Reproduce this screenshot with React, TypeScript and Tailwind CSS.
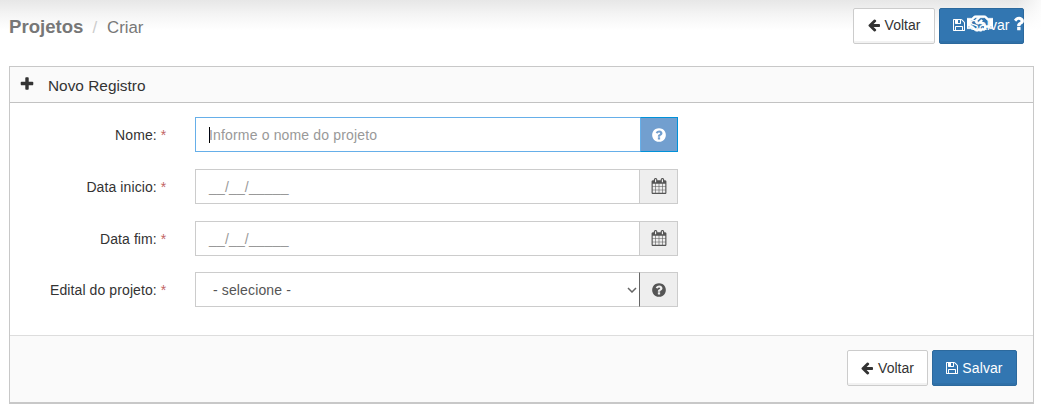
import { type PropsWithChildren, type ReactNode } from "react";
import clsx from "clsx";
import { FaRegHandshake } from "react-icons/fa";

// Solid glyphs on a 1792 unit grid, one em wide.
const glyphs = {
  plus: "M1600 736v192q0 40-28 68t-68 28h-416v416q0 40-28 68t-68 28h-192q-40 0-68-28t-28-68v-416h-416q-40 0-68-28t-28-68v-192q0-40 28-68t68-28h416v-416q0-40 28-68t68-28h192q40 0 68 28t28 68v416h416q40 0 68 28t28 68z",
  arrowLeft:
    "M1664 896v128q0 53-32.5 90.5t-84.5 37.5h-704l293 294q38 36 38 90t-38 90l-75 76q-37 37-90 37-52 0-91-37l-651-652q-37-37-37-90 0-52 37-91l651-650q38-38 91-38 52 0 90 38l75 74q38 38 38 91t-38 91l-293 293h704q52 0 84.5 37.5t32.5 90.5z",
  save: "M512 1536h768v-384h-768v384zm896 0h128v-896q0-14-10-38.5t-20-34.5l-281-281q-10-10-34-20t-39-10v416q0 40-28 68t-68 28h-576q-40 0-68-28t-28-68v-416h-128v1280h128v-416q0-40 28-68t68-28h832q40 0 68 28t28 68v416zm-384-928v-320q0-13-9.5-22.5t-22.5-9.5h-192q-13 0-22.5 9.5t-9.5 22.5v320q0 13 9.5 22.5t22.5 9.5h192q13 0 22.5-9.5t9.5-22.5zm640 32v928q0 40-28 68t-68 28h-1344q-40 0-68-28t-28-68v-1344q0-40 28-68t68-28h928q40 0 88 20t76 48l280 280q28 28 48 76t20 88z",
  calendar:
    "M192 1664h288v-288h-288v288zm352 0h320v-288h-320v288zm-352-352h288v-320h-288v320zm352 0h320v-320h-320v320zm-352-384h288v-288h-288v288zm736 736h320v-288h-320v288zm-384-736h320v-288h-320v288zm768 736h288v-288h-288v288zm-384-352h320v-320h-320v320zm-352-864v-288q0-13-9.5-22.5t-22.5-9.5h-64q-13 0-22.5 9.5t-9.5 22.5v288q0 13 9.5 22.5t22.5 9.5h64q13 0 22.5-9.5t9.5-22.5zm736 864h288v-320h-288v320zm-384-384h320v-288h-320v288zm384 0h288v-288h-288v288zm32-480v-288q0-13-9.5-22.5t-22.5-9.5h-64q-13 0-22.5 9.5t-9.5 22.5v288q0 13 9.5 22.5t22.5 9.5h64q13 0 22.5-9.5t9.5-22.5zm384-64v1280q0 52-38 90t-90 38h-1408q-52 0-90-38t-38-90v-1280q0-52 38-90t90-38h128v-96q0-66 47-113t113-47h64q66 0 113 47t47 113v96h384v-96q0-66 47-113t113-47h64q66 0 113 47t47 113v96h128q52 0 90 38t38 90z",
  help: "M1024 1376v-192q0-14-9-23t-23-9h-192q-14 0-23 9t-9 23v192q0 14 9 23t23 9h192q14 0 23-9t9-23zm256-672q0-88-55.5-163t-138.5-116-170-41q-243 0-371 213-15 24 8 42l132 100q7 6 19 6 16 0 25-12 53-68 86-92 34-24 86-24 48 0 85.5 26t37.5 59q0 38-20 61t-68 45q-63 28-115.5 86.5t-52.5 125.5v36q0 14 9 23t23 9h192q14 0 23-9t9-23q0-19 21.5-49.5t54.5-49.5q32-18 49-28.5t46-35 44.5-48 28-60.5 12.5-81zm384 192q0 209-103 385.5t-279.5 279.5-385.5 103-385.5-103-279.5-279.5-103-385.5 103-385.5 279.5-279.5 385.5-103 385.5 103 279.5 279.5 103 385.5z",
  question:
    "M1088 1256v240q0 16-12 28t-28 12h-240q-16 0-28-12t-12-28v-240q0-16 12-28t28-12h240q16 0 28 12t12 28zm316-600q0 54-15.5 101t-35 76.5-55 59.5-57.5 43.5-61 35.5q-41 23-68.5 65t-27.5 67q0 17-12 32.5t-28 15.5h-240q-15 0-25.5-18.5t-10.5-37.5v-45q0-83 65-156.5t143-108.5q59-27 84-56t25-76q0-42-46.5-74t-107.5-32q-65 0-108 29-35 25-107 115-13 16-31 16-12 0-25-8l-164-125q-13-10-15.5-25t5.5-28q160-266 464-266 80 0 161 31t146 83 106 127.5 41 158.5z",
};

type GlyphName = keyof typeof glyphs;

const Glyph = ({ name, className }: { name: GlyphName; className?: string }) => (
  <svg viewBox="0 0 1792 1792" fill="currentColor" aria-hidden="true" className={clsx("shrink-0", className)}>
    <path d={glyphs[name]} />
  </svg>
);

const BackButton = ({ className }: { className: string }) => (
  <button
    type="button"
    className={clsx(
      "flex h-9 items-center justify-center gap-1 rounded-[2px] border border-[#ccc] bg-white pr-px text-[#333] shadow-[inset_0_-2px_0_rgba(0,0,0,0.05)]",
      className,
    )}
  >
    <Glyph name="arrowLeft" className="size-[14px]" />
    Voltar
  </button>
);

const SaveButton = ({ className }: { className?: string }) => (
  <button
    type="button"
    className={clsx(
      "flex h-9 w-[85px] items-center justify-center gap-[3px] rounded-[2px] border border-[#2c699d] bg-[#3276b1] pr-px text-white shadow-[inset_0_-2px_0_rgba(0,0,0,0.05)]",
      className,
    )}
  >
    <Glyph name="save" className="size-[14px]" />
    <span className="tracking-[0.1px]">Salvar</span>
  </button>
);

type FieldProps = PropsWithChildren<{
  label: string;
  addon: GlyphName;
  focused?: boolean;
  className?: string;
}>;

const Field = ({ label, addon, focused, className, children }: FieldProps) => (
  <div className={clsx("flex h-[35px] items-center", className)}>
    <div className="w-[157px] pr-[0.6px] text-right tracking-[0.1px] text-[#333]">
      {label}: <span className="text-[#c26565]">*</span>
    </div>
    <div className="ml-7 flex h-full w-[483px]">
      <div
        className={clsx(
          "flex min-w-0 flex-1 items-center border border-r-0 bg-white pl-[13px]",
          focused ? "border-[#66afe9]" : "border-[#ccc]",
        )}
      >
        {children}
      </div>
      <div
        className={clsx(
          "flex items-center justify-center border",
          focused
            ? "w-[38px] border-[#0091d9] border-l-[#66afe9] bg-[#729fcf] text-white"
            : "w-[39px] border-[#ccc] bg-[#eee] text-[#555]",
          label === "Edital do projeto" && "border-l-[#666]",
        )}
      >
        <Glyph name={addon} className={clsx("size-4", addon === "calendar" && "mb-px")} />
      </div>
    </div>
  </div>
);

const Placeholder = ({ children }: { children: ReactNode }) => (
  <span className="tracking-[0.16px] text-[#999]">{children}</span>
);

const App = () => (
  <div className="relative flex h-[405px] flex-col overflow-hidden bg-white pr-[7px] pl-[9px] font-['Liberation_Sans',Arial,sans-serif] text-[14px] leading-5">
    {/* Soft shade that the top navigation leaves on the page. */}
    <div className="pointer-events-none absolute inset-x-0 top-0 h-[30px] bg-linear-to-b from-[#e7e7e7] via-[#f5f5f5] to-white">
      <div className="absolute top-0 right-0 h-full w-6 bg-linear-to-r from-transparent to-white/80" />
    </div>

    <header className="relative flex h-[66px] shrink-0 justify-between pt-2">
      <div className="flex h-9 items-center text-[#777]">
        <span className="pt-px text-[18.6px] font-bold">Projetos</span>
        <span className="ml-[9px] pt-[3px] text-[16.8px] text-[#ccc]">/</span>
        <span className="ml-[10px] pt-[3px] text-[16.8px]">Criar</span>
      </div>
      <div className="mr-[10px] flex gap-1">
        <BackButton className="w-[82px] pb-[3px]" />
        <SaveButton className="pb-[3px]" />
      </div>
      {/* Navigation shortcuts float over the page actions. */}
      <div className="absolute top-[13px] right-[6px] flex items-center gap-[16px] text-white">
        <FaRegHandshake className="h-[21px] w-[26px]" stroke="currentColor" strokeWidth={14} />
        <Glyph name="question" className="mb-px size-[19px]" />
      </div>
    </header>

    <main className="relative flex h-[338px] shrink-0 flex-col border border-b-2 border-[#c8c8c8]">
      <div className="flex h-9 shrink-0 items-center border-b border-[#c2c2c2] bg-[#fafafa] pl-[9px] text-[#333]">
        <Glyph name="plus" className="mb-px size-4" />
        <h2 className="ml-[13px] pt-[3px] text-[15.4px]">Novo Registro</h2>
      </div>

      <form className="flex flex-1 flex-col gap-[17px] pt-[14px]">
        <Field label="Nome" addon="help" focused>
          <span className="-mr-px h-4 w-px bg-black" />
          <Placeholder>Informe o nome do projeto</Placeholder>
        </Field>
        <Field label="Data inicio" addon="calendar">
          <Placeholder>__/__/_____</Placeholder>
        </Field>
        <Field label="Data fim" addon="calendar">
          <Placeholder>__/__/_____</Placeholder>
        </Field>
        <Field label="Edital do projeto" addon="help" className="-mt-px">
          <span className="flex-1 pl-1 tracking-[0.13px] text-[#555]">- selecione -</span>
          <svg viewBox="0 0 10 6" className="mr-[2px] h-[6px] w-[10px]" fill="none" stroke="#666" strokeWidth="1.5">
            <path d="M1 1l4 4 4-4" />
          </svg>
        </Field>
      </form>

      <footer className="flex h-[67px] shrink-0 justify-end gap-1 border-t border-[#ddd] bg-[#fafafa] pt-[14px] pr-4">
        <BackButton className="w-[81px]" />
        <SaveButton />
      </footer>
    </main>
  </div>
);

export default App;
